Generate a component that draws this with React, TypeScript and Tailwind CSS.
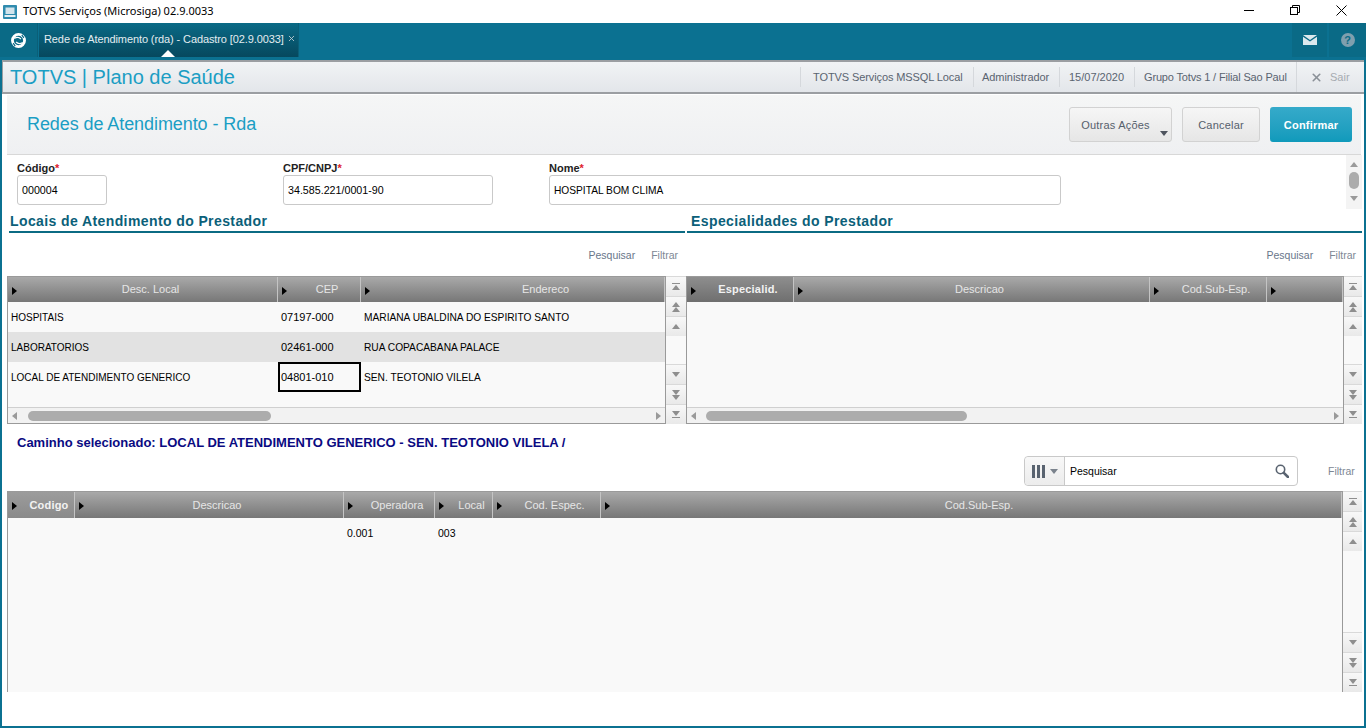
import { X } from 'lucide-react';

interface Column {
  label: string;
  width: string;
  tone?: 'dark' | 'light';
  pad?: string;
}

interface Row {
  cells: string[];
  shaded?: boolean;
}

const localColumns: Column[] = [
  { label: 'Desc. Local', width: 'w-[270px]' },
  { label: 'CEP', width: 'w-[83px]' },
  { label: 'Endereco', width: 'flex-1', pad: 'pl-[66px]' },
];

const especialidadeColumns: Column[] = [
  { label: 'Especialid.', width: 'w-[107px]', tone: 'dark' },
  { label: 'Descricao', width: 'w-[356px]' },
  { label: 'Cod.Sub-Esp.', width: 'w-[117px]' },
  { label: '', width: 'flex-1' },
];

const caminhoColumns: Column[] = [
  { label: 'Codigo', width: 'w-[67px]', tone: 'light' },
  { label: 'Descricao', width: 'w-[269px]' },
  { label: 'Operadora', width: 'w-[91px]' },
  { label: 'Local', width: 'w-[58px]' },
  { label: 'Cod. Espec.', width: 'w-[108px]' },
  { label: 'Cod.Sub-Esp.', width: 'flex-1' },
];

const localRows: Row[] = [
  { cells: ['HOSPITAIS', '07197-000', 'MARIANA UBALDINA DO ESPIRITO SANTO'] },
  { cells: ['LABORATORIOS', '02461-000', 'RUA COPACABANA PALACE'], shaded: true },
  { cells: ['LOCAL DE ATENDIMENTO GENERICO', '04801-010', 'SEN. TEOTONIO VILELA'] },
];

function Triangle({ dir, className = '' }: { dir: 'up' | 'down' | 'left' | 'right'; className?: string }) {
  const points = {
    up: '0,5 8,5 4,0',
    down: '0,0 8,0 4,5',
    left: '5,0 5,8 0,4',
    right: '0,0 0,8 5,4',
  }[dir];
  const box = dir === 'up' || dir === 'down' ? 'w-2 h-[5px]' : 'w-[5px] h-2';
  const viewBox = dir === 'up' || dir === 'down' ? '0 0 8 5' : '0 0 5 8';
  return (
    <svg viewBox={viewBox} className={`${box} ${className}`}>
      <polygon points={points} fill="currentColor" />
    </svg>
  );
}

function ScrollButton({ kind }: { kind: 'first' | 'prev' | 'back' | 'next' | 'fwd' | 'last' }) {
  const up = kind === 'first' || kind === 'prev' || kind === 'back';
  const dir = up ? 'up' : 'down';
  return (
    <div className="h-[20px] w-full shrink-0 flex flex-col items-center justify-center border-t border-[#d9d9d9] bg-gradient-to-b from-[#f8f8f8] to-[#e9e9e9] text-[#8e8e8e]">
      {kind === 'first' && <div className="h-px w-2 bg-[#8e8e8e] mb-px" />}
      <Triangle dir={dir} />
      {(kind === 'prev' || kind === 'fwd') && <Triangle dir={dir} />}
      {kind === 'last' && <div className="h-px w-2 bg-[#8e8e8e] mt-px" />}
    </div>
  );
}

function VScroll({ width }: { width: string }) {
  return (
    <div className={`${width} shrink-0 h-full flex flex-col overflow-hidden bg-[#f9f9f9]`}>
      <ScrollButton kind="first" />
      <ScrollButton kind="prev" />
      <ScrollButton kind="back" />
      <div className="flex-1" />
      <ScrollButton kind="next" />
      <ScrollButton kind="fwd" />
      <ScrollButton kind="last" />
    </div>
  );
}

function HScroll({ thumb }: { thumb: string }) {
  return (
    <div className="h-[16px] shrink-0 border-t border-[#d0d0d0] bg-[#f2f2f2] flex items-center px-[4px] text-[#9a9a9a]">
      <Triangle dir="left" />
      <div className={`h-[10px] rounded-[5px] bg-[#acacac] ${thumb}`} />
      <div className="flex-1" />
      <Triangle dir="right" />
    </div>
  );
}

function HeaderCell({ column }: { column: Column }) {
  const bg =
    column.tone === 'dark'
      ? 'from-[#8e8e8e] to-[#6f6f6f]'
      : column.tone === 'light'
        ? 'from-[#9c9c9c] to-[#8a8a8a]'
        : 'from-[#a9a9a9] to-[#777777]';
  const text = column.tone ? 'font-bold text-[#f2f2f2] tracking-[0.2px]' : 'text-[#e6e6e6]';
  return (
    <div className={`${column.width} shrink-0 relative h-full flex items-center justify-center border-r border-[#c4c4c4] bg-gradient-to-b ${bg}`}>
      <Triangle dir="right" className="absolute left-[4px] top-[10px] text-black" />
      <span className={`text-[11px] ${column.pad ?? 'pl-4'} ${text}`}>{column.label}</span>
    </div>
  );
}

function GridHeader({ columns, height = 'h-[25px]' }: { columns: Column[]; height?: string }) {
  return (
    <div className={`${height} shrink-0 flex`}>
      {columns.map((column, index) => (
        <HeaderCell key={index} column={column} />
      ))}
    </div>
  );
}

function SectionHeading({ title, className, inset }: { title: string; className: string; inset: string }) {
  return (
    <div className={className}>
      <h2 className={`h-[22px] text-[14px] leading-[24px] font-bold tracking-[0.4px] text-[#0b6079] ${inset}`}>{title}</h2>
      <div className="h-[2px] bg-[#0b6b83]" />
    </div>
  );
}

function Field({ label, value, width, size }: { label: string; value: string; width: string; size: string }) {
  return (
    <label className={`${width} block`}>
      <span className="block h-[14px] text-[11px] leading-[14px] font-bold text-[#222]">
        {label}
        <span className="text-[#e0202c]">*</span>
      </span>
      <span className={`flex items-center h-[30px] rounded-[3px] border border-[#c9c9c9] bg-white pl-[4px] text-black ${size}`}>{value}</span>
    </label>
  );
}

export default function App() {
  return (
    <div className="w-[1366px] h-[728px] overflow-hidden flex flex-col bg-white font-['Liberation_Sans',Arial,sans-serif]">
      {/* title bar */}
      <div className="h-[23px] shrink-0 flex items-center">
        <svg viewBox="0 0 14 14" className="ml-[3px] w-[14px] h-[14px]">
          <rect width="14" height="14" rx="1" fill="#2f8bae" />
          <rect x="2.5" y="2.5" width="9" height="6.5" fill="#d3e4ec" />
          <rect x="1.5" y="10" width="11" height="2" fill="#e6eff3" />
        </svg>
        <span className="ml-[6px] text-[11px] text-black font-['Noto_Sans',sans-serif]">TOTVS Serviços (Microsiga) 02.9.0033</span>
        <div className="ml-auto mr-[2px] -mt-[3px] flex items-center">
          <div className="w-[46px] flex justify-center">
            <div className="w-[10px] h-px bg-black" />
          </div>
          <div className="w-[46px] flex justify-center">
            <svg viewBox="0 0 10 10" className="w-[10px] h-[10px]" fill="none" stroke="black">
              <rect x="0.5" y="2.5" width="7" height="7" />
              <path d="M2.5 2.5V0.5H9.5V7.5H7.5" />
            </svg>
          </div>
          <div className="w-[46px] flex justify-center">
            <svg viewBox="0 0 11 11" className="w-[11px] h-[11px]" stroke="black" strokeWidth="1">
              <path d="M0.5 0.5L10.5 10.5M10.5 0.5L0.5 10.5" />
            </svg>
          </div>
        </div>
      </div>

      <div className="flex-1 min-h-0 flex flex-col border-x-2 border-b-2 border-[#0b7191]">
        {/* top bar */}
        <div className="h-[37px] shrink-0 flex bg-[#0b7191] -mx-[2px]">
          <div className="w-[38px] h-[34px] flex items-center justify-center bg-[#0a6a86] border-r border-[#0a5f78]">
            <svg viewBox="0 0 18 18" className="w-[17px] h-[17px]">
              <circle cx="9" cy="9" r="6.4" fill="none" stroke="white" strokeWidth="3" />
              <path d="M4.5 6.8C7 5.4 10 5.8 11.5 7.4" fill="none" stroke="white" strokeWidth="1.4" />
              <path d="M13.5 11.2C11 12.6 8 12.2 6.5 10.6" fill="none" stroke="white" strokeWidth="1.4" />
              <path d="M12.5 3L14.6 6.2M5.5 15L3.4 11.8" stroke="#0a6a86" strokeWidth="1.3" />
            </svg>
          </div>
          <div className="relative ml-px w-[260px] h-[34px] pl-[5px] flex items-center bg-gradient-to-b from-[#0a6a86] to-[#06485e] border-r border-[#0a5f78]">
            <span className="text-[11px] tracking-[-0.1px] text-[#e3edf1] -mt-[1px] whitespace-nowrap">Rede de Atendimento (rda) - Cadastro [02.9.0033]</span>
            <X size={9} strokeWidth={2.5} className="absolute right-[2px] top-[11px] text-[#b5c7ce]" />
            <div className="absolute left-[122px] bottom-0 w-0 h-0 border-x-[7px] border-x-transparent border-b-[7px] border-b-white" />
          </div>
          <div className="ml-auto flex h-[34px]">
            <div className="w-[36px] flex items-center justify-center bg-[#0a6a86] border-r border-[#0b7191]">
              <svg viewBox="0 0 14 10" className="w-[14px] h-[10px]">
                <path d="M0 0H14L7 5Z" fill="#dce8ed" />
                <path d="M0 1.8L7 6.6L14 1.8V10H0Z" fill="#dce8ed" />
              </svg>
            </div>
            <div className="ml-px w-[37px] flex items-center justify-center bg-[#0a6a86]">
              <span className="w-[14px] h-[14px] rounded-full bg-[#7f9fae] flex items-center justify-center text-[11px] font-bold text-[#0a6a86]">?</span>
            </div>
          </div>
        </div>

        {/* module header */}
        <div className="h-[34px] shrink-0 flex items-center border-y-2 border-[#9b9ea2] bg-gradient-to-b from-[#f1f3f5] to-[#e3e6ea] pl-[7px] border-l border-l-[#9b9ea2]">
          <span className="text-[20px] text-[#1b9ec4]">TOTVS | Plano de Saúde</span>
          <div className="ml-auto h-full flex items-center text-[11px] text-[#5a6470] whitespace-nowrap">
            <span className="w-[173px] pl-[12px] border-l border-[#d5d8dc] leading-[20px] tracking-[-0.1px]">TOTVS Serviços MSSQL Local</span>
            <span className="w-[86px] pl-[8px] border-l border-[#d5d8dc] leading-[20px] tracking-[-0.05px]">Administrador</span>
            <span className="w-[75px] pl-[9px] border-l border-[#d5d8dc] leading-[20px]">15/07/2020</span>
            <span className="w-[162px] pl-[9px] border-l border-[#d5d8dc] leading-[20px] tracking-[-0.16px]">Grupo Totvs 1 / Filial Sao Paul</span>
            <span className="w-[68px] pl-[13px] h-full flex items-center border-l border-[#d5d8dc] text-[#a6abb1]">
              <X size={13} strokeWidth={3} className="text-[#8a9097]" />
              <span className="ml-[7px]">Sair</span>
            </span>
          </div>
        </div>

        {/* page title and actions */}
        <div className="h-[61px] shrink-0 ml-[5px] mr-[3px] flex items-center border-t border-white border-b border-b-[#d8d8d8] bg-gradient-to-b from-[#f5f6f6] to-[#eff0f2]">
          <h1 className="ml-[20px] text-[18px] tracking-[-0.08px] text-[#1b9ec4]">Redes de Atendimento - Rda</h1>
          <div className="ml-auto mr-[9px] flex items-center text-[11px]">
            <button className="relative w-[103px] h-[35px] pt-px pr-[10px] tracking-[0.2px] rounded-[3px] border border-[#d2d2d2] bg-gradient-to-b from-[#f6f6f6] to-[#e6e6e6] text-[#56606c]">
              Outras Ações
              <span className="absolute right-[3px] bottom-[5px] w-0 h-0 border-x-[4px] border-x-transparent border-t-[5px] border-t-[#4e545e]" />
            </button>
            <button className="ml-[10px] w-[78px] h-[35px] pt-px tracking-[0.2px] rounded-[3px] border border-[#d2d2d2] bg-gradient-to-b from-[#f6f6f6] to-[#e6e6e6] text-[#56606c]">Cancelar</button>
            <button className="ml-[10px] w-[82px] h-[35px] pt-px tracking-[0.2px] rounded-[3px] bg-gradient-to-b from-[#35aaca] to-[#0f9abb] font-bold text-white">Confirmar</button>
          </div>
        </div>

        {/* form */}
        <div className="h-[54px] shrink-0 relative flex pl-[15px] pt-[6px]">
          <Field label="Código" value="000004" width="w-[90px] mr-[176px]" size="text-[10.7px]" />
          <Field label="CPF/CNPJ" value="34.585.221/0001-90" width="w-[210px] mr-[56px]" size="text-[10.7px]" />
          <Field label="Nome" value="HOSPITAL BOM CLIMA" width="w-[512px]" size="text-[10.2px] pt-px" />
          <div className="absolute right-[2px] top-0 w-[16px] h-[54px] flex flex-col items-center pt-[7px] bg-[#f4f4f4] text-[#9a9a9a]">
            <Triangle dir="up" />
            <div className="mt-[5px] w-[10px] h-[17px] rounded-[5px] bg-[#acacac]" />
            <Triangle dir="down" className="mt-[7px]" />
          </div>
        </div>

        {/* section headings */}
        <div className="h-[24px] shrink-0 flex pl-[7px] pr-[2px]">
          <SectionHeading title="Locais de Atendimento do Prestador" className="w-[676px] mr-[2px]" inset="pl-px" />
          <SectionHeading title="Especialidades do Prestador" className="flex-1" inset="pl-[4px]" />
        </div>

        <div className="h-[43px] shrink-0 flex text-[10.5px] text-[#68768a]">
          <div className="w-[684px] pt-[15px] pr-[8px] flex justify-end gap-[16px]">
            <span>Pesquisar</span>
            <span className="text-[#7d8794]">Filtrar</span>
          </div>
          <div className="flex-1 pt-[15px] pr-[8px] flex justify-end gap-[16px]">
            <span>Pesquisar</span>
            <span className="text-[#7d8794]">Filtrar</span>
          </div>
        </div>

        {/* upper grids */}
        <div className="h-[148px] shrink-0 flex pl-[5px] pr-[2px]">
          <div className="w-[659px] h-full flex flex-col border border-[#9a9a9a] bg-[#f9f9f9]">
            <GridHeader columns={localColumns} />
            <div className="flex-1 text-black">
              {localRows.map((row, index) => (
                <div key={index} className={`h-[30px] flex items-center ${row.shaded ? 'bg-[#e2e2e2]' : ''}`}>
                  <div className="w-[270px] pl-[3px] text-[10px]">{row.cells[0]}</div>
                  <div className={`w-[83px] h-full flex items-center pl-px text-[11px] border-2 ${index === 2 ? 'border-black' : 'border-transparent'}`}>{row.cells[1]}</div>
                  <div className="flex-1 pl-[3px] pt-px text-[10.2px]">{row.cells[2]}</div>
                </div>
              ))}
            </div>
            <HScroll thumb="ml-[11px] w-[243px]" />
          </div>
          <VScroll width="w-[20px]" />
          <div className="w-[658px] h-full flex flex-col border border-[#9a9a9a] bg-[#f9f9f9]">
            <GridHeader columns={especialidadeColumns} />
            <div className="flex-1" />
            <HScroll thumb="ml-[10px] w-[261px]" />
          </div>
          <VScroll width="flex-1" />
        </div>

        <div className="h-[32px] shrink-0 pl-[15px] pt-[6px] flex items-center">
          <p className="text-[13px] font-bold text-[#0a0a82]">
            Caminho selecionado: LOCAL DE ATENDIMENTO GENERICO - SEN. TEOTONIO VILELA /
          </p>
        </div>

        {/* search row */}
        <div className="h-[35px] shrink-0 flex items-start">
          <div className="ml-[1022px] w-[274px] h-[30px] flex rounded-[4px] border border-[#c9c9c9] bg-white">
            <div className="w-[40px] h-full flex items-center justify-center rounded-l-[4px] border-r border-[#c9c9c9] bg-gradient-to-b from-[#f8f8f8] to-[#ececec]">
              <div className="flex gap-[2px]">
                <div className="w-[3px] h-[13px] bg-[#596370]" />
                <div className="w-[3px] h-[13px] bg-[#596370]" />
                <div className="w-[3px] h-[13px] bg-[#596370]" />
              </div>
              <div className="ml-[5px] w-0 h-0 border-x-[4px] border-x-transparent border-t-[5px] border-t-[#7b838d]" />
            </div>
            <span className="flex-1 pl-[5px] leading-[29px] text-[10.5px] text-black">Pesquisar</span>
            <svg viewBox="0 0 14 14" className="mt-[7px] mr-[8px] w-[14px] h-[14px]" fill="none" stroke="#596370">
              <circle cx="5.5" cy="5.5" r="4.2" strokeWidth="1.6" />
              <path d="M8.8 8.8L13 13" strokeWidth="2.6" strokeLinecap="round" />
            </svg>
          </div>
          <span className="ml-[30px] mt-[8px] text-[10.5px] text-[#7d8794]">Filtrar</span>
        </div>

        {/* lower grid */}
        <div className="flex-1 min-h-0 flex pl-[5px] pr-[2px] pb-[34px]">
          <div className="w-[1336px] h-full flex flex-col border-x border-t border-[#9a9a9a] bg-[#f9f9f9]">
            <GridHeader columns={caminhoColumns} height="h-[26px]" />
            <div className="h-[32px] flex items-center text-[10.5px] text-black">
              <div className="w-[336px]" />
              <div className="w-[91px] pl-[3px]">0.001</div>
              <div className="pl-[3px]">003</div>
            </div>
          </div>
          <VScroll width="flex-1" />
        </div>
      </div>
    </div>
  );
}
